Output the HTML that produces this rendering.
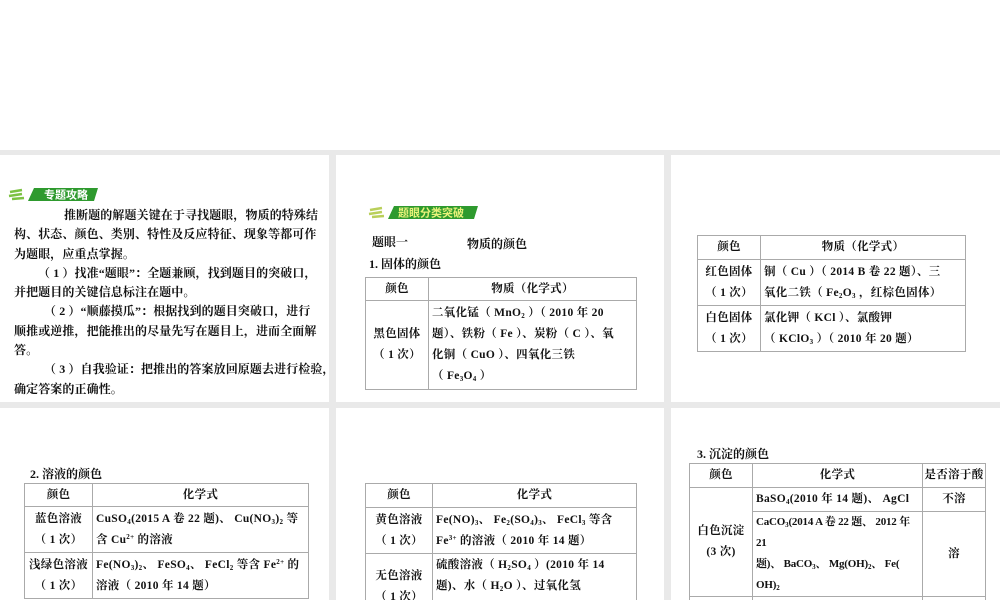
<!DOCTYPE html>
<html><head><meta charset="utf-8"><style>
*{margin:0;padding:0;box-sizing:border-box}
html,body{width:1000px;height:600px;overflow:hidden}
body{background:#fff;position:relative;font-family:"Liberation Serif","Noto Serif CJK SC",serif;font-size:12px;font-weight:bold;color:#111}
.gray{position:absolute;background:#e9e9e9}
.p{position:absolute;background:#fff;overflow:hidden}
.a{position:absolute;white-space:nowrap}
table{position:absolute;border-collapse:collapse;border:1.5px solid #888;table-layout:fixed}
td{border:1px solid #aaa;font-size:11.5px;line-height:21px;padding:0 3px;vertical-align:middle;white-space:nowrap;letter-spacing:0.3px;overflow:hidden}
td.c{text-align:center}
sub{font-size:7px;vertical-align:-2px;line-height:0}
sup{font-size:7px;vertical-align:4px;line-height:0}
.txt{position:absolute;left:14px;width:320px;line-height:19.3px;font-size:12px;white-space:nowrap;letter-spacing:0.1px}
.badge{position:absolute;height:15px}
</style></head><body>
<div class="gray" style="left:0;top:150px;width:1000px;height:450px"></div>
<div class="p" style="left:0;top:155px;width:329px;height:247px"></div>
<div class="p" style="left:336px;top:155px;width:328px;height:247px"></div>
<div class="p" style="left:671px;top:155px;width:329px;height:247px"></div>
<div class="p" style="left:0;top:408px;width:329px;height:192px"></div>
<div class="p" style="left:336px;top:408px;width:328px;height:192px"></div>
<div class="p" style="left:671px;top:408px;width:329px;height:192px"></div>

<svg class="badge" style="left:8px;top:186px" width="90" height="16"><path d="M2 6 L14 4 M1 10 L14 8 M4 13 L16 12" stroke="#7cc242" stroke-width="2.5" fill="none"/><polygon points="26,2 90,2 86,15 20,15" fill="#2e9a2e"/><text x="36" y="12.5" font-size="11" fill="#fff" font-weight="bold" font-family="Noto Sans CJK SC,sans-serif">专题攻略</text></svg>
<div class="txt" style="top:206px">
<div style="padding-left:50px">推断题的解题关键在于寻找题眼，物质的特殊结</div>
<div>构、状态、颜色、类别、特性及反应特征、现象等都可作</div>
<div>为题眼，应重点掌握。</div>
<div style="padding-left:24px">（ 1 ）找准“题眼”：全题兼顾，找到题目的突破口，</div>
<div>并把题目的关键信息标注在题中。</div>
<div style="padding-left:30px">（ 2 ）“顺藤摸瓜”：根据找到的题目突破口，进行</div>
<div>顺推或逆推，把能推出的尽量先写在题目上，进而全面解</div>
<div>答。</div>
<div style="padding-left:30px">（ 3 ）自我验证：把推出的答案放回原题去进行检验，</div>
<div>确定答案的正确性。</div>
</div>

<svg class="badge" style="left:368px;top:204px" width="110" height="16"><path d="M2 6 L14 4 M1 10 L14 8 M4 13 L16 12" stroke="#b9cf5a" stroke-width="2.5" fill="none"/><polygon points="26,2 110,2 106,15 20,15" fill="#2e9a2e"/><text x="30" y="12.5" font-size="11" fill="#e9f27a" font-weight="bold" font-family="Noto Sans CJK SC,sans-serif">题眼分类突破</text></svg>
<div class="a" style="left:372px;top:233px">题眼一</div>
<div class="a" style="left:467px;top:235px">物质的颜色</div>
<div class="a" style="left:369px;top:255px">1. 固体的颜色</div>
<table style="left:365px;top:277px;width:272px">
<tr><td class="c" style="width:63px;height:23px">颜色</td><td class="c">物质（化学式）</td></tr>
<tr><td class="c" style="height:89px">黑色固体<br>（ 1 次）</td><td>二氧化锰（ MnO<sub>2</sub> ）（ 2010 年 20<br>题）、铁粉（ Fe ）、炭粉（ C ）、氧<br>化铜（ CuO ）、四氧化三铁<br>（ Fe<sub>3</sub>O<sub>4</sub> ）</td></tr>
</table>

<table style="left:697px;top:235px;width:269px">
<tr><td class="c" style="width:63px;height:24px">颜色</td><td class="c">物质（化学式）</td></tr>
<tr><td class="c" style="height:46px">红色固体<br>（ 1 次）</td><td>铜（ Cu ）（ 2014 B 卷 22 题）、三<br>氧化二铁（ Fe<sub>2</sub>O<sub>3</sub> ，红棕色固体）</td></tr>
<tr><td class="c" style="height:46px">白色固体<br>（ 1 次）</td><td>氯化钾（ KCl ）、氯酸钾<br>（ KClO<sub>3</sub> ）（ 2010 年 20 题）</td></tr>
</table>

<div class="a" style="left:30px;top:465px">2. 溶液的颜色</div>
<table style="left:24px;top:483px;width:285px">
<tr><td class="c" style="width:68px;height:23px">颜色</td><td class="c">化学式</td></tr>
<tr><td class="c" style="height:46px">蓝色溶液<br>（ 1 次）</td><td>CuSO<sub>4</sub>(2015 A 卷 22 题)、 Cu(NO<sub>3</sub>)<sub>2</sub> 等<br>含 Cu<sup>2+</sup> 的溶液</td></tr>
<tr><td class="c" style="height:46px">浅绿色溶液<br>（ 1 次）</td><td>Fe(NO<sub>3</sub>)<sub>2</sub>、 FeSO<sub>4</sub>、 FeCl<sub>2</sub> 等含 Fe<sup>2+</sup> 的<br>溶液（ 2010 年 14 题）</td></tr>
</table>

<table style="left:365px;top:483px;width:272px">
<tr><td class="c" style="width:67px;height:24px">颜色</td><td class="c">化学式</td></tr>
<tr><td class="c" style="height:46px">黄色溶液<br>（ 1 次）</td><td>Fe(NO)<sub>3</sub>、 Fe<sub>2</sub>(SO<sub>4</sub>)<sub>3</sub>、 FeCl<sub>3</sub> 等含<br>Fe<sup>3+</sup> 的溶液（ 2010 年 14 题）</td></tr>
<tr><td class="c" style="height:66px">无色溶液<br>（ 1 次）</td><td>硫酸溶液（ H<sub>2</sub>SO<sub>4</sub> ）(2010 年 14<br>题)、水（ H<sub>2</sub>O ）、过氧化氢<br>&nbsp;</td></tr>
</table>

<div class="a" style="left:697px;top:445px">3. 沉淀的颜色</div>
<table style="left:689px;top:463px;width:297px">
<tr><td class="c" style="width:63px;height:24px">颜色</td><td class="c">化学式</td><td class="c" style="width:63px;padding:0">是否溶于酸</td></tr>
<tr><td class="c" rowspan="2">白色沉淀<br>(3 次)</td><td style="height:24px">BaSO<sub>4</sub>(2010 年 14 题)、 AgCl</td><td class="c">不溶</td></tr>
<tr><td style="height:84px;letter-spacing:-0.2px;font-size:11px">CaCO<sub>3</sub>(2014 A 卷 22 题、 2012 年<br>21<br>题)、 BaCO<sub>3</sub>、 Mg(OH)<sub>2</sub>、 Fe(<br>OH)<sub>2</sub></td><td class="c">溶</td></tr>
<tr><td style="height:20px"></td><td></td><td></td></tr>
</table>
</body></html>
